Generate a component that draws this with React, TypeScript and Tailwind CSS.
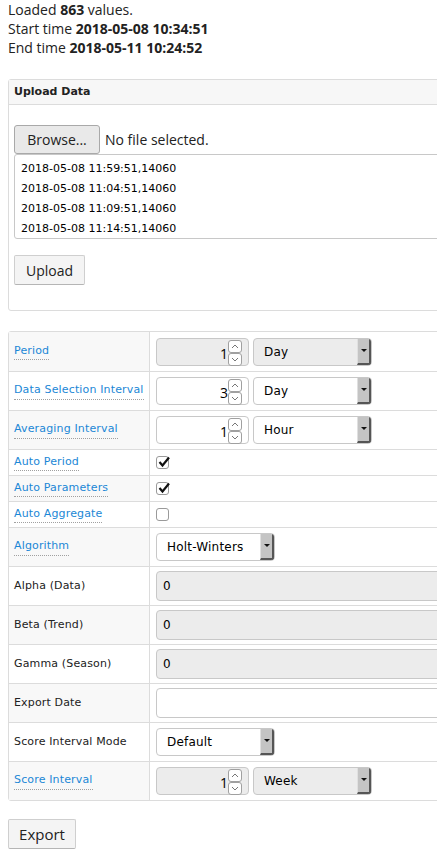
import { ReactNode } from 'react';

const labelFont = { fontFamily: '"DejaVu Sans", Verdana, sans-serif' };

type Row = {
    label: string;
    link?: boolean;
    tall?: boolean;
    content: ReactNode;
};

function Spinner() {
    return (
        <div className="flex flex-col absolute right-[6px] top-[1px]">
            <div className="w-[14px] h-[13px] border border-[#a0a0a0] rounded-[3px] bg-white flex items-center justify-center">
                <svg width="8" height="5" viewBox="0 0 8 5"><path d="M1 4 L4 1 L7 4" fill="none" stroke="#777" strokeWidth="1" /></svg>
            </div>
            <div className="w-[14px] h-[13px] border border-[#a0a0a0] rounded-[3px] bg-white flex items-center justify-center">
                <svg width="8" height="5" viewBox="0 0 8 5"><path d="M1 1 L4 4 L7 1" fill="none" stroke="#777" strokeWidth="1" /></svg>
            </div>
        </div>
    );
}

function NumberBox({ value, disabled }: { value: string; disabled?: boolean }) {
    return (
        <div className={`relative w-[93px] h-[28px] border border-[#c8c8c8] rounded-[4px] ${disabled ? 'bg-[#ececec]' : 'bg-white'}`}>
            <span className="absolute right-[20px] top-[4px] text-[14px] text-black">{value}</span>
            <Spinner />
        </div>
    );
}

function SelectBox({ value, width, disabled }: { value: string; width: string; disabled?: boolean }) {
    return (
        <div className={`flex items-stretch h-[28px] ${width} border border-[#c8c8c8] rounded-[4px] overflow-hidden ${disabled ? 'bg-[#ececec]' : 'bg-white'}`}>
            <span className="flex-1 pl-[10px] flex items-center text-[12px] tracking-[0.2px] text-black" style={labelFont}>{value}</span>
            <div className="w-[14px] bg-[#c4c4c4] border-r-2 border-b-2 border-[#555] border-l border-l-[#e0e0e0] flex items-center justify-center">
                <svg width="6" height="4" viewBox="0 0 6 4"><path d="M0 0 L6 0 L3 3 Z" fill="#111" /></svg>
            </div>
        </div>
    );
}

function Check({ checked }: { checked?: boolean }) {
    return (
        <div className="w-[13px] h-[13px] border border-[#9a9a9a] rounded-[3px] bg-white relative">
            {checked && (
                <svg className="absolute left-[1px] top-[-1px]" width="12" height="12" viewBox="0 0 12 12">
                    <path d="M1.5 6 L4.5 9.5 L11 1.5" fill="none" stroke="#111" strokeWidth="2.2" />
                </svg>
            )}
        </div>
    );
}

function TextBox({ value, disabled }: { value: string; disabled?: boolean }) {
    return (
        <div className={`h-[30px] w-[320px] border border-[#c8c8c8] rounded-[4px] flex items-center pl-[6px] text-[12px] text-black ${disabled ? 'bg-[#ececec]' : 'bg-white'}`} style={labelFont}>
            {value}
        </div>
    );
}

export default function App() {
    const rows: Row[] = [
        { label: 'Period', link: true, tall: true, content: <div className="flex gap-[4px]"><NumberBox value="1" disabled /><SelectBox value="Day" width="w-[119px]" disabled /></div> },
        { label: 'Data Selection Interval', link: true, tall: true, content: <div className="flex gap-[4px]"><NumberBox value="3" /><SelectBox value="Day" width="w-[119px]" /></div> },
        { label: 'Averaging Interval', link: true, tall: true, content: <div className="flex gap-[4px]"><NumberBox value="1" /><SelectBox value="Hour" width="w-[119px]" /></div> },
        { label: 'Auto Period', link: true, content: <Check checked /> },
        { label: 'Auto Parameters', link: true, content: <Check checked /> },
        { label: 'Auto Aggregate', link: true, content: <Check /> },
        { label: 'Algorithm', link: true, tall: true, content: <SelectBox value="Holt-Winters" width="w-[119px]" /> },
        { label: 'Alpha (Data)', tall: true, content: <TextBox value="0" disabled /> },
        { label: 'Beta (Trend)', tall: true, content: <TextBox value="0" disabled /> },
        { label: 'Gamma (Season)', tall: true, content: <TextBox value="0" disabled /> },
        { label: 'Export Date', tall: true, content: <TextBox value="" /> },
        { label: 'Score Interval Mode', tall: true, content: <SelectBox value="Default" width="w-[119px]" /> },
        { label: 'Score Interval', link: true, tall: true, content: <div className="flex gap-[4px]"><NumberBox value="1" disabled /><SelectBox value="Week" width="w-[119px]" disabled /></div> },
    ];

    return (
        <div className="w-[437px] overflow-hidden bg-white text-[#222]" style={{ fontFamily: '"Open Sans", "Noto Sans", sans-serif' }}>
            <div className="w-[700px] px-[8px]">
                {/* Summary */}
                <div className="text-[14px] leading-[19px]">
                    <div>Loaded <b>863</b> values.</div>
                    <div>Start time <b>2018-05-08 10:34:51</b></div>
                    <div>End time <b>2018-05-11 10:24:52</b></div>
                </div>

                {/* Upload panel */}
                <div className="mt-[22px] border border-[#dcdcdc] rounded-[3px]">
                    <div className="h-[25px] bg-[#f7f7f7] border-b border-[#dcdcdc] px-[5px] flex items-center text-[11px] font-bold text-[#222]" style={labelFont}>
                        Upload Data
                    </div>
                    <div className="px-[5px] pt-[20px] pb-[25px]">
                        <div className="flex items-center gap-[5px]">
                            <button className="h-[29px] w-[86px] bg-[#e9e9e9] border border-[#a9a9a9] rounded-[3px] text-[14px] text-[#222]">Browse...</button>
                            <span className="text-[14px] text-[#222]">No file selected.</span>
                        </div>
                        <div className="h-[85px] border border-[#c8c8c8] rounded-[3px] pl-[6px] pt-[4px] text-[11px] leading-[20px] text-black" style={labelFont}>
                            <div>2018-05-08 11:59:51,14060</div>
                            <div>2018-05-08 11:04:51,14060</div>
                            <div>2018-05-08 11:09:51,14060</div>
                            <div>2018-05-08 11:14:51,14060</div>
                        </div>
                        <button className="mt-[16px] h-[30px] w-[71px] bg-[#f4f4f4] border border-[#cfcfcf] border-b-[#b5b5b5] rounded-[2px] text-[14px] text-[#222]">Upload</button>
                    </div>
                </div>

                {/* Settings table */}
                <div className="mt-[20px] border border-[#dcdcdc] rounded-[3px]">
                    {rows.map((row, i) => (
                        <div key={row.label} className={`flex ${i > 0 ? 'border-t border-[#dcdcdc]' : ''} ${row.tall ? 'h-[39px]' : 'h-[26px]'}`}>
                            <div className={`w-[141px] shrink-0 border-r border-[#dcdcdc] px-[5px] flex items-center ${i % 2 === 0 ? 'bg-[#f8f8f8]' : 'bg-white'}`}>
                                <span
                                    className={`text-[11px] tracking-[0.15px] ${row.link ? 'text-[#1b87d6] border-b border-dotted border-[#a0a0a0]' : 'text-[#222]'}`}
                                    style={labelFont}
                                >
                                    {row.label}
                                </span>
                            </div>
                            <div className="flex-1 px-[6px] flex items-center bg-white">{row.content}</div>
                        </div>
                    ))}
                </div>

                <button className="mt-[18px] h-[30px] w-[68px] bg-[#f4f4f4] border border-[#cfcfcf] border-b-[#b5b5b5] rounded-[2px] text-[15px] text-[#222]">Export</button>
            </div>
        </div>
    );
}
